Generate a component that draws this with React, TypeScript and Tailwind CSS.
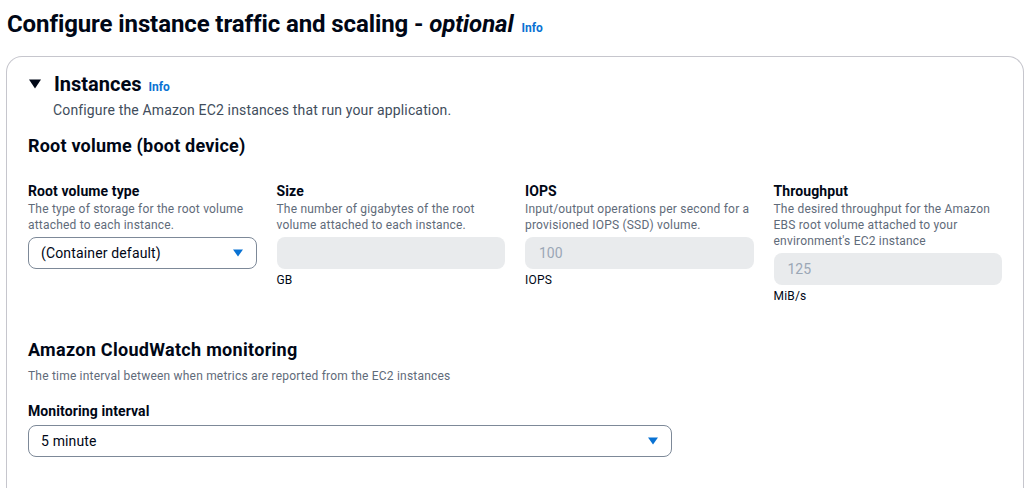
import React from "react";

const font = { fontFamily: "Roboto, 'Noto Sans', sans-serif" };

function Caret() {
  return (
    <svg width="12" height="8" viewBox="0 0 12 8" className="shrink-0">
      <path d="M1 0.5 H11 L6 7.5 Z" fill="#0972d3" />
    </svg>
  );
}

function Field({
  label,
  desc,
  children,
  unit,
}: {
  label: string;
  desc: string[];
  children: React.ReactNode;
  unit?: string;
}) {
  return (
    <div className="flex flex-col">
      <div className="text-[14px] font-bold leading-[20px] text-[#000716] tracking-[0.1px]">{label}</div>
      <div className="text-[12px] leading-[16px] text-[#5f6b7a] tracking-[0.2px]">
        {desc.map((d, i) => (
          <div key={i}>{d}</div>
        ))}
      </div>
      <div className="mt-[4px]">{children}</div>
      {unit && <div className="mt-[3px] text-[12px] leading-[16px] text-[#000716] tracking-[0.2px]">{unit}</div>}
    </div>
  );
}

function Disabled({ value }: { value?: string }) {
  return (
    <div className="h-[32px] rounded-[8px] bg-[#e9ebed] px-[14px] flex items-center text-[14px] text-[#9ba7b6]">
      {value}
    </div>
  );
}

export default function App() {
  return (
    <div className="h-[488px] overflow-hidden bg-white text-[#000716]" style={font}>
      <div className="px-[7px] pt-[9px]">
        <div className="flex items-baseline gap-[8px]">
          <h1 className="text-[24px] font-bold leading-[30px] tracking-[-0.1px]">
            Configure instance traffic and scaling - <i className="font-bold">optional</i>
          </h1>
          <span className="text-[12px] font-bold text-[#0972d3]">Info</span>
        </div>
      </div>
      <div className="mt-[17px] ml-[6px] mr-[8px] h-[460px] rounded-t-[16px] border border-b-0 border-[#c6c6cd] px-[21px] pt-[14px]">
        <div className="flex items-center">
          <svg width="12" height="10" viewBox="0 0 12 10" className="mr-[13px] ml-[1px]">
            <path d="M0 0.5 H12 L6 9.5 Z" fill="#000716" />
          </svg>
          <div className="flex items-baseline gap-[7px]">
            <span className="text-[20px] font-bold leading-[26px]">Instances</span>
            <span className="text-[12px] font-bold text-[#0972d3]">Info</span>
          </div>
        </div>
        <div className="mt-[3px] ml-[25px] text-[14px] leading-[20px] text-[#414d5c] tracking-[0.15px]">
          Configure the Amazon EC2 instances that run your application.
        </div>

        <div className="mt-[14px] text-[18px] font-bold leading-[24px] tracking-[0.2px]">Root volume (boot device)</div>

        <div className="mt-[23px] grid grid-cols-4 gap-x-[20px]">
          <Field
            label="Root volume type"
            desc={["The type of storage for the root volume", "attached to each instance."]}
          >
            <div className="h-[32px] rounded-[8px] border border-[#7d8998] px-[12px] flex items-center justify-between text-[14px] tracking-[0.15px]">
              <span>(Container default)</span>
              <Caret />
            </div>
          </Field>
          <Field
            label="Size"
            desc={["The number of gigabytes of the root", "volume attached to each instance."]}
            unit="GB"
          >
            <Disabled />
          </Field>
          <Field
            label="IOPS"
            desc={["Input/output operations per second for a", "provisioned IOPS (SSD) volume."]}
            unit="IOPS"
          >
            <Disabled value="100" />
          </Field>
          <Field
            label="Throughput"
            desc={[
              "The desired throughput for the Amazon",
              "EBS root volume attached to your",
              "environment's EC2 instance",
            ]}
            unit="MiB/s"
          >
            <Disabled value="125" />
          </Field>
        </div>

        <div className="mt-[34px] text-[18px] font-bold leading-[24px] tracking-[0.3px]">Amazon CloudWatch monitoring</div>
        <div className="mt-[6px] text-[12px] leading-[16px] text-[#5f6b7a] tracking-[0.2px]">
          The time interval between when metrics are reported from the EC2 instances
        </div>
        <div className="mt-[17px] text-[14px] font-bold leading-[20px] tracking-[0.1px]">Monitoring interval</div>
        <div className="mt-[4px] w-[644px] h-[32px] rounded-[8px] border border-[#7d8998] px-[12px] flex items-center justify-between text-[14px] tracking-[0.15px]">
          <span>5 minute</span>
          <Caret />
        </div>
      </div>
    </div>
  );
}
